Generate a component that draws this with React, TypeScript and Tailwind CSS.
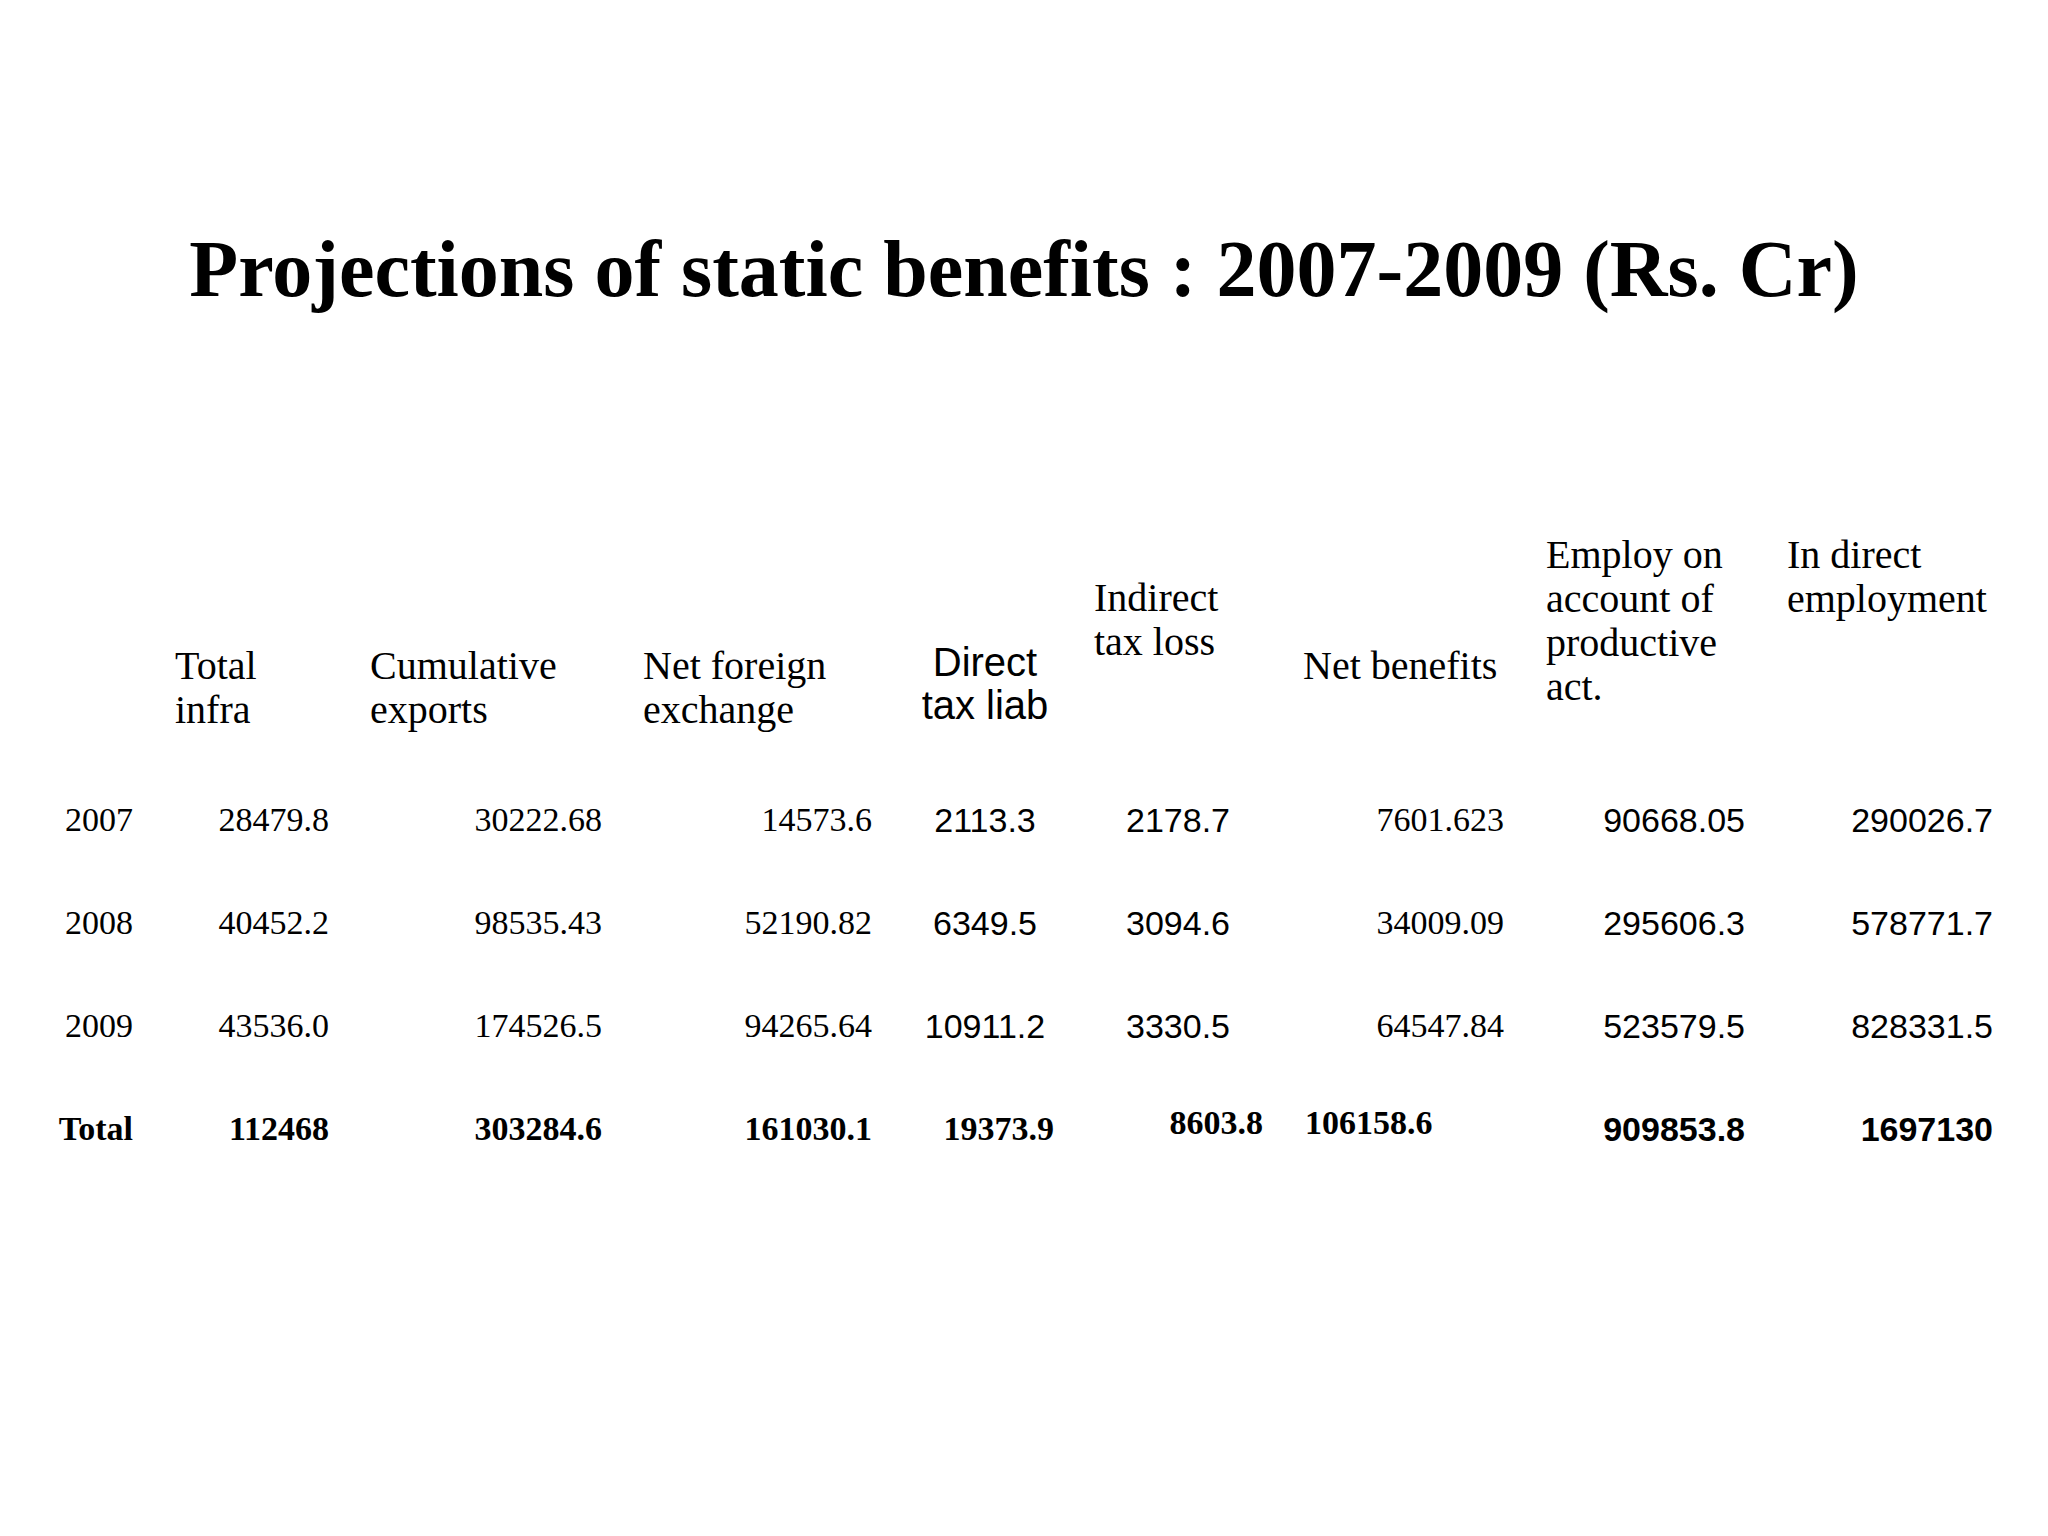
const serif = "font-['Liberation_Serif','Times_New_Roman',serif]"
const sans = "font-['Liberation_Sans',Arial,sans-serif]"

type Cell = { text: string; cls: string }

const rows: { year: string; cells: Cell[] }[] = [
  {
    year: '2007',
    cells: [
      { text: '28479.8', cls: `${serif} text-right pr-[26px]` },
      { text: '30222.68', cls: `${serif} text-right pr-[28px]` },
      { text: '14573.6', cls: `${serif} text-right pr-[18px]` },
      { text: '2113.3', cls: `${sans} text-center` },
      { text: '2178.7', cls: `${sans} text-center pr-[14px]` },
      { text: '7601.623', cls: `${serif} text-right pr-[26px]` },
      { text: '90668.05', cls: `${sans} text-right pr-[30px]` },
      { text: '290026.7', cls: `${sans} text-right pr-[47px]` },
    ],
  },
  {
    year: '2008',
    cells: [
      { text: '40452.2', cls: `${serif} text-right pr-[26px]` },
      { text: '98535.43', cls: `${serif} text-right pr-[28px]` },
      { text: '52190.82', cls: `${serif} text-right pr-[18px]` },
      { text: '6349.5', cls: `${sans} text-center` },
      { text: '3094.6', cls: `${sans} text-center pr-[14px]` },
      { text: '34009.09', cls: `${serif} text-right pr-[26px]` },
      { text: '295606.3', cls: `${sans} text-right pr-[30px]` },
      { text: '578771.7', cls: `${sans} text-right pr-[47px]` },
    ],
  },
  {
    year: '2009',
    cells: [
      { text: '43536.0', cls: `${serif} text-right pr-[26px]` },
      { text: '174526.5', cls: `${serif} text-right pr-[28px]` },
      { text: '94265.64', cls: `${serif} text-right pr-[18px]` },
      { text: '10911.2', cls: `${sans} text-center` },
      { text: '3330.5', cls: `${sans} text-center pr-[14px]` },
      { text: '64547.84', cls: `${serif} text-right pr-[26px]` },
      { text: '523579.5', cls: `${sans} text-right pr-[30px]` },
      { text: '828331.5', cls: `${sans} text-right pr-[47px]` },
    ],
  },
]

const totals: Cell[] = [
  { text: '112468', cls: `${serif} text-right pr-[26px]` },
  { text: '303284.6', cls: `${serif} text-right pr-[28px]` },
  { text: '161030.1', cls: `${serif} text-right pr-[18px]` },
  { text: '19373.9', cls: `${serif} text-right pr-[26px]` },
  { text: '8603.8', cls: `${serif} text-right pr-[27px] -mt-[12px]` },
  { text: '106158.6', cls: `${serif} text-left pl-[15px] -mt-[12px]` },
  { text: '909853.8', cls: `${sans} text-right pr-[30px]` },
  { text: '1697130', cls: `${sans} text-right pr-[47px]` },
]

const grid = 'grid grid-cols-[150px_205px_275px_260px_190px_210px_240px_245px_265px]'

export default function App() {
  return (
    <div className="w-[2048px] h-[1536px] bg-white text-black overflow-hidden">
      <h1 className={`${serif} pt-[229px] text-center text-[80px] leading-none font-bold`}>
        Projections of static benefits : 2007-2009 (Rs. Cr)
      </h1>

      <div className="mt-[224px]">
        {/* header row */}
        <div className={`${grid} h-[235px] text-[40px] leading-[44px]`}>
          <div />
          <div className={`${serif} pl-[25px] pt-[111px]`}>Total<br />infra</div>
          <div className={`${serif} pl-[15px] pt-[111px]`}>Cumulative<br />exports</div>
          <div className={`${serif} pl-[13px] pt-[111px]`}>Net foreign<br />exchange</div>
          <div className={`${sans} text-center pt-[108px] leading-[43px]`}>Direct<br />tax liab</div>
          <div className={`${serif} pl-[14px] pt-[43px]`}>Indirect<br />tax loss</div>
          <div className={`${serif} pl-[13px] pt-[111px]`}>Net benefits</div>
          <div className={`${serif} pl-[16px]`}>Employ on<br />account of<br />productive<br />act.</div>
          <div className={`${serif} pl-[12px]`}>In direct<br />employment</div>
        </div>

        {rows.map((r) => (
          <div key={r.year} className={`${grid} h-[103px] items-center text-[34px] leading-none`}>
            <div className={`${serif} text-right pr-[17px]`}>{r.year}</div>
            {r.cells.map((c, i) => (
              <div key={i} className={c.cls}>{c.text}</div>
            ))}
          </div>
        ))}

        <div className={`${grid} h-[103px] items-center text-[34px] leading-none font-bold`}>
          <div className={`${serif} text-right pr-[17px]`}>Total</div>
          {totals.map((c, i) => (
            <div key={i} className={c.cls}>{c.text}</div>
          ))}
        </div>
      </div>
    </div>
  )
}
